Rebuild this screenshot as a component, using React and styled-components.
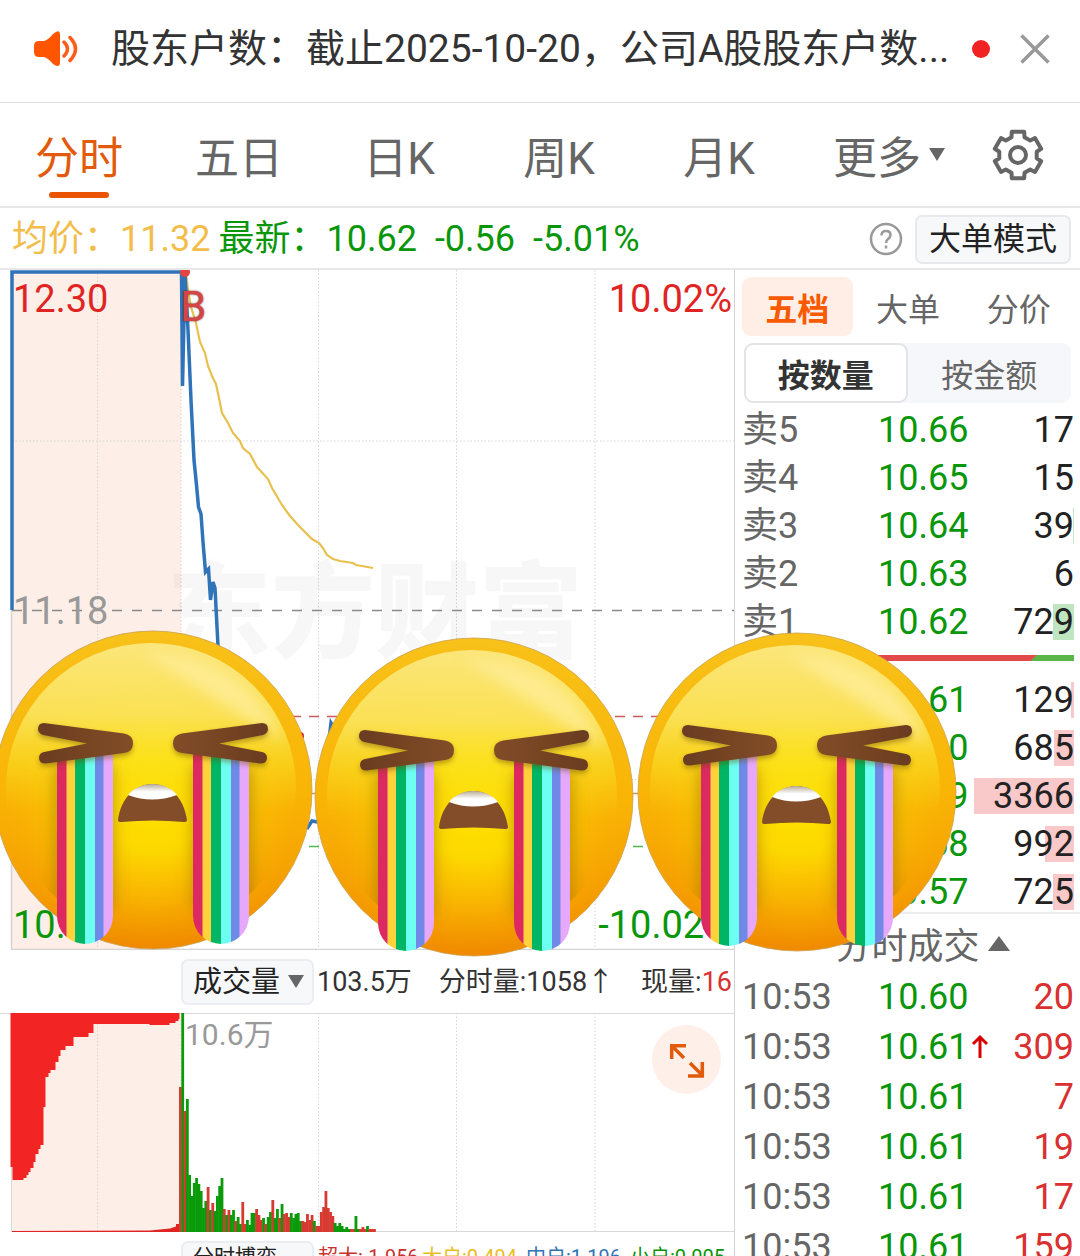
import styled, { createGlobalStyle } from "styled-components";

const GlobalStyle = createGlobalStyle`
  *,
  *::before,
  *::after {
    box-sizing: border-box;
  }
  body {
    margin: 0;
    background: #fff;
    color: #222;
    font-family: Roboto, "Noto Sans CJK SC", sans-serif;
  }
  button {
    font-family: inherit;
    color: inherit;
    margin: 0;
    padding: 0;
    border: 0;
    background: none;
    cursor: pointer;
  }
  svg {
    display: block;
    flex-shrink: 0;
  }
`;

const tabs = ["分时", "五日", "日K", "周K", "月K"];

const sells = [
  { label: "卖5", price: "10.66", amount: 17, bar: 0 },
  { label: "卖4", price: "10.65", amount: 15, bar: 0 },
  { label: "卖3", price: "10.64", amount: 39, bar: 1 },
  { label: "卖2", price: "10.63", amount: 6, bar: 0 },
  { label: "卖1", price: "10.62", amount: 729, bar: 21 },
];

const buys = [
  { label: "买1", price: "10.61", amount: 129, bar: 3 },
  { label: "买2", price: "10.60", amount: 685, bar: 20 },
  { label: "买3", price: "10.59", amount: 3366, bar: 100 },
  { label: "买4", price: "10.58", amount: 992, bar: 29 },
  { label: "买5", price: "10.57", amount: 725, bar: 21 },
];

const trades = [
  { time: "10:53", price: "10.60", amount: 20 },
  { time: "10:53", price: "10.61", amount: 309, up: true },
  { time: "10:53", price: "10.61", amount: 7 },
  { time: "10:53", price: "10.61", amount: 19 },
  { time: "10:53", price: "10.61", amount: 17 },
  { time: "10:53", price: "10.61", amount: 159 },
];

const flows = [
  { name: "超大", value: "-1.956", color: "#c8322f" },
  { name: "大户", value: "0.494", color: "#e8bd1c" },
  { name: "中户", value: "1.196", color: "#2f73b9" },
  { name: "小户", value: "0.005", color: "#0a960a" },
];

const faces = [
  { left: -7, top: 360 },
  { left: 314, top: 367 },
  { left: 637, top: 362 },
];

// one bar per minute: r = up, g = down, followed by the height
const volumes =
  "r145 g219 r121 g133 g57 g36 g49 g54 g48 g41 g24 g31 r45 g22 r29 g21 g36 g46 g54 r23 g17 r22 g17 g22 r11 g15 g8 r30 r8 g12 g7 g19 g19 r23 r17 r12 g14 r8 g15 g20 r32 g14 g23 r14 g28 r18 r19 r15 g19 g14 g18 g19 g11 r11 r10 r18 r12 r17 g11 r6 r6 r20 r25 r41 r24 r20 r16 g9 g6 g9 g6 g3 g5 g3 r3 r3 g16 g3 r3 r5 r3 g6 r3 r3 r3"
    .split(" ")
    .map((item) => ({ up: item[0] === "r", height: Number(item.slice(1)) }));

const auction = [
  [11, 154],
  [13, 167],
  [24, 165],
  [27, 162],
  [29, 159],
  [31, 155],
  [34, 149],
  [36, 141],
  [39, 136],
  [41, 132],
  [44, 94],
  [46, 64],
  [49, 60],
  [51, 57],
  [56, 49],
  [59, 43],
  [61, 37],
  [66, 33],
  [74, 24],
  [89, 20],
  [94, 11],
  [150, 12],
  [170, 10],
  [176, 8],
  [179, 6],
];
const auctionPath =
  "M10.5 0" + auction.map(([x, y]) => `H${x - 0.5}V${y}`).join("") + "H179.5V0Z";

const gearPoints = [0, 1, 2, 3, 4, 5]
  .flatMap((tooth) =>
    [
      [-20, 19],
      [-15, 24],
      [15, 24],
      [20, 19],
    ].map(([offset, radius]) => {
      const angle = ((tooth * 60 - 90 + offset) * Math.PI) / 180;
      return `${26 + radius * Math.cos(angle)},${26 + radius * Math.sin(angle)}`;
    })
  )
  .join(" ");

export default function App() {
  return (
    <Page>
      <GlobalStyle />
      <Notice />
      <PeriodTabs />
      <PriceBar />
      <Board>
        <Charts>
          <PriceChart />
          <VolumeChart />
          <FlowRow>
            <SelectorButton $small>分时博弈</SelectorButton>
            <Flows>
              {flows.map(({ name, value, color }) => (
                <Flow key={name} $color={color}>
                  {name}:{value}
                </Flow>
              ))}
            </Flows>
          </FlowRow>
        </Charts>
        <Side>
          <SideTabs>
            <SideTab $active>五档</SideTab>
            <SideTab>大单</SideTab>
            <SideTab>分价</SideTab>
          </SideTabs>
          <Segment>
            <SegmentButton $active>按数量</SegmentButton>
            <SegmentButton>按金额</SegmentButton>
          </Segment>
          <OrderTable rows={sells} color="#bfe6c0" />
          <RatioBar viewBox="0 0 329 6" preserveAspectRatio="none">
            <rect width="329" height="6" fill="#5cb548" />
            <path d="M0 0H292L286 6H0Z" fill="#e24a4a" />
          </RatioBar>
          <OrderTable rows={buys} color="#f9c8c8" />
          <TradesTitle>
            分时成交
            <Triangle $size={11} $up />
          </TradesTitle>
          <Table>
            <tbody>
              {trades.map(({ time, price, amount, up }, index) => (
                <TradeRow key={index}>
                  <LabelCell>{time}</LabelCell>
                  <PriceCell>
                    <PriceValue>
                      {price}
                      {up && <UpArrow />}
                    </PriceValue>
                  </PriceCell>
                  <AmountCell $color="#d93030">{amount}</AmountCell>
                </TradeRow>
              ))}
            </tbody>
          </Table>
        </Side>
        {faces.map(({ left, top }) => (
          <Face key={left} $left={left} $top={top}>
            <CryingFace />
          </Face>
        ))}
      </Board>
    </Page>
  );
}

function Notice() {
  return (
    <NoticeBar>
      <svg width="46" height="38" viewBox="0 0 46 38" fill="none">
        <path
          d="M6 11H11Q15 10 20 4Q27 -2 27 5V32Q27 39 20 34Q15 28 11 27H6Q1 27 1 22V16Q1 11 6 11Z"
          fill="#ff5500"
        />
        <path
          d="M31 12Q38 19 31 26M37 7.500Q48 19 37 30.500"
          stroke="#ff5c1a"
          strokeWidth="3.500"
          strokeLinecap="round"
        />
      </svg>
      <NoticeText>股东户数：截止2025-10-20，公司A股股东户数...</NoticeText>
      <Dot />
      <button aria-label="关闭">
        <svg width="30" height="30" viewBox="0 0 30 30">
          <path d="M1.500 1.500L28.500 28.500M28.500 1.500L1.500 28.500" stroke="#999" strokeWidth="3.500" />
        </svg>
      </button>
    </NoticeBar>
  );
}

function PeriodTabs() {
  return (
    <TabBar>
      {tabs.map((tab, index) => (
        <Tab key={tab} $active={index === 0}>
          {tab}
        </Tab>
      ))}
      <Tab>
        更多
        <Triangle $size={8} />
      </Tab>
      <GearButton aria-label="设置">
        <svg width="52" height="52" viewBox="0 0 52 52" fill="none" stroke="#666" strokeWidth="4">
          <polygon points={gearPoints} strokeLinejoin="round" />
          <circle cx="26" cy="26" r="8" />
        </svg>
      </GearButton>
    </TabBar>
  );
}

function PriceBar() {
  return (
    <PriceRow>
      <Quote $color="#f2bd4b">均价：11.32</Quote>
      <Quote $color="#0a960a" $gap={8}>
        最新：10.62
      </Quote>
      <Quote $color="#0a960a" $gap={18}>
        -0.56
      </Quote>
      <Quote $color="#0a960a" $gap={18}>
        -5.01%
      </Quote>
      <HelpButton aria-label="帮助">
        <svg width="34" height="34" viewBox="0 0 34 34" fill="none" stroke="#999" strokeWidth="2.500">
          <circle cx="17" cy="17" r="15" />
          <path d="M12.500 13.500Q12.500 9 17 9Q21.500 9 21.500 13Q21.500 15 19 17Q17 18.500 17 21" />
          <path d="M17 23.500V26.500" />
        </svg>
      </HelpButton>
      <ModeButton>大单模式</ModeButton>
    </PriceRow>
  );
}

function PriceChart() {
  return (
    <ChartBox>
      <ChartSvg viewBox="0 0 734 680" fill="none">
        <rect x="12" y="1" width="169" height="678" fill="#fdeee7" />
        <g stroke="#d8d4d4" strokeDasharray="1.500 2">
          <path d="M97.500 0V679M181 0V679M318.500 0V679M456.500 0V679M595 0V679" />
          <path d="M12 171H734M12 509.500H734" />
        </g>
        <path d="M11.500 340V679.500H734" stroke="#d4d4d4" strokeWidth="1.500" />
        <WatermarkText x="375" y="380" textAnchor="middle">
          东方财富
        </WatermarkText>
        <path d="M12 340.500H734" stroke="#8a8a8a" strokeWidth="1.500" strokeDasharray="10" />
        <g strokeDasharray="10 8" strokeWidth="1.500">
          <path d="M183 446.500H734" stroke="#cc5c5c" />
          <path d="M183 523.500H734" stroke="#c09a50" />
          <path d="M183 576.500H734" stroke="#52b852" />
        </g>
        <path
          d="M186 2L188 20L191 37L196 53L200 72L205 83L208 96L212 106L216 114L219 128L222 143L228 153L233 163L240 171L243 178L250 184L257 197L268 209L272 218L282 235L290 246L298 255L312 269L319 273L323 278L327 285L333 289L340 291L353 293L356 295L362 296L373 298"
          stroke="#e8c04f"
          strokeWidth="2.200"
        />
        <g stroke="#2f73b9" strokeWidth="3.500">
          <path d="M12 340V2H181.500" />
          <path d="M181.500 2L182.500 116L185 4L188 60L191 130L194 190L196.500 215L198.500 237L201 244L203 272L205.500 302L208.500 299L210.500 330L213 312L215 318L218 376" />
          <path d="M218 376L262 480L300 545L308 557L312 551L318 552L360 500L331 453L329 470" />
        </g>
        <circle cx="300" cy="466" r="4" fill="#e02020" />
        <circle cx="185" cy="2" r="5" fill="#e34444" />
      </ChartSvg>
      <ChartLabel $corner="topLeft" $color="#e02424">
        12.30
      </ChartLabel>
      <ChartLabel $corner="topRight" $color="#e02424">
        10.02%
      </ChartLabel>
      <ChartLabel $corner="middle" $color="#999">
        11.18
      </ChartLabel>
      <ChartLabel $corner="bottomLeft" $color="#0a960a">
        10.06
      </ChartLabel>
      <ChartLabel $corner="bottomRight" $color="#0a960a">
        -10.02%
      </ChartLabel>
      <BuyMark>B</BuyMark>
    </ChartBox>
  );
}

function VolumeChart() {
  return (
    <>
      <VolumeHeader>
        <SelectorButton>
          成交量
          <Triangle $size={8} />
        </SelectorButton>
        <VolumeStats>
          <span>103.5万</span>
          <span>分时量:1058↑</span>
          <span>
            现量:<Red>16</Red>
          </span>
        </VolumeStats>
      </VolumeHeader>
      <ChartBox>
        <ChartSvg viewBox="0 0 734 220" fill="none">
          <rect x="12" y="0" width="169" height="219" fill="#fdeee7" />
          <path d="M97.500 0V219M181 0V219M318.500 0V219M456.500 0V219M595 0V219" stroke="#d8d4d4" strokeDasharray="1.500 2" />
          <path d="M11.500 0V219M0 0.500H734M11 218.500H734" stroke="#d9d9d9" />
          <path d={auctionPath} fill="#f22424" />
          <path d="M12 219V218L150 217.500L170 215.500L176 213.500V211H180V219Z" fill="#e02424" />
          {volumes.map(({ up, height }, index) => (
            <rect
              key={index}
              x={179 + index * 2.31}
              y={219 - height}
              width="2.800"
              height={height}
              fill={up ? "#d63a30" : "#0a9a0a"}
            />
          ))}
        </ChartSvg>
        <VolumeLabel>10.6万</VolumeLabel>
        <ExpandButton aria-label="全屏">
          <svg width="36" height="36" viewBox="0 0 36 36" fill="none" stroke="#e25a0c" strokeWidth="3.500">
            <path d="M2.700 17V3.700H17M3 4L15 16" />
            <path d="M33.300 20V34H19M33 33L21 21" />
          </svg>
        </ExpandButton>
      </ChartBox>
    </>
  );
}

function OrderTable({ rows, color }) {
  return (
    <Table>
      <tbody>
        {rows.map(({ label, price, amount, bar }) => (
          <OrderRow key={label}>
            <LabelCell>{label}</LabelCell>
            <PriceCell>{price}</PriceCell>
            <AmountCell $color="#222">
              <AmountBar $color={color} style={{ width: bar }} />
              <AmountValue>{amount}</AmountValue>
            </AmountCell>
          </OrderRow>
        ))}
      </tbody>
    </Table>
  );
}

function UpArrow() {
  return (
    <svg width="18" height="26" viewBox="0 0 18 26" fill="none" stroke="#d90000" strokeWidth="3">
      <path d="M9 24V3M2 10L9 3L16 10" />
    </svg>
  );
}

const stripes = [
  [0, 10, "#dc2962"],
  [9.5, 9, "#ffd13b"],
  [18, 10.5, "#00b563"],
  [28, 10, "#6cfff2"],
  [38, 9, "#7088e6"],
  [46.5, 9.5, "#e6a8fb"],
];

function CryingFace() {
  return (
    <svg width="320" height="320" viewBox="0 0 320 320">
      <defs>
        <linearGradient id="faceBase" x1="0" y1="0" x2="0" y2="1">
          <stop offset="0" stopColor="#f8c21a" />
          <stop offset="0.5" stopColor="#f9b506" />
          <stop offset="0.8" stopColor="#f59e02" />
          <stop offset="1" stopColor="#f08a00" />
        </linearGradient>
        <radialGradient id="faceGlow" cx="160" cy="160" r="155" gradientUnits="userSpaceOnUse">
          <stop offset="0" stopColor="#fee200" />
          <stop offset="0.4" stopColor="#fdd800" />
          <stop offset="0.7" stopColor="#fbc402" stopOpacity="0.6" />
          <stop offset="1" stopColor="#f9b000" stopOpacity="0" />
        </radialGradient>
        <linearGradient id="faceLight" x1="0" y1="0" x2="0" y2="1">
          <stop offset="0" stopColor="#fbe67a" />
          <stop offset="0.25" stopColor="#fbe45c" stopOpacity="0.9" />
          <stop offset="0.42" stopColor="#f9e42a" stopOpacity="0.5" />
          <stop offset="0.58" stopColor="#fbd520" stopOpacity="0" />
        </linearGradient>
        <linearGradient id="faceTeeth" x1="0" y1="0" x2="0" y2="1">
          <stop offset="0" stopColor="#b9ab95" />
          <stop offset="0.5" stopColor="#fff" />
        </linearGradient>
        <linearGradient id="faceEye" x1="0" y1="0" x2="1" y2="0">
          <stop offset="0" stopColor="#6a3c20" />
          <stop offset="1" stopColor="#824d28" />
        </linearGradient>
        <clipPath id="faceClip">
          <circle cx="158" cy="158" r="145" />
        </clipPath>
        <clipPath id="tearClip">
          <path d="M0 121H56V286A28 28 0 0 1 0 286Z" />
        </clipPath>
        <filter id="faceBlur" x="-50%" y="-50%" width="200%" height="200%">
          <feGaussianBlur stdDeviation="7" />
        </filter>
        <filter id="faceShadow" x="-20%" y="-30%" width="140%" height="180%">
          <feDropShadow dx="0" dy="3" stdDeviation="2.500" floodColor="#6b4a00" floodOpacity="0.45" />
        </filter>
        <g id="faceTear" clipPath="url(#tearClip)">
          {stripes.map(([x, width, fill]) => (
            <rect key={x} x={x} y="100" width={width} height="214" fill={fill} />
          ))}
        </g>
        <path
          id="faceLid"
          d="M51 93L131 103.500Q140 105 140 113.500Q140 122 131 123L53 133.500Q46 133.500 46 128Q46 123 51 122L94 113.500L50 105Q45 103 45 99Q45 93 51 93Z"
          fill="url(#faceEye)"
        />
      </defs>
      <circle cx="160" cy="160" r="159" fill="url(#faceBase)" stroke="#c9a050" strokeWidth="0.800" />
      <circle cx="160" cy="160" r="158" fill="url(#faceGlow)" />
      <circle cx="158" cy="158" r="145" fill="url(#faceLight)" />
      <g clipPath="url(#faceClip)">
        <g filter="url(#faceBlur)">
          <path d="M150 22Q256 24 290 112Q236 78 150 22Z" fill="#fff0a0" opacity="0.7" />
          <g fill="#9c7400" opacity="0.5">
            <rect x="60" y="130" width="62" height="154" rx="16" />
            <rect x="198" y="130" width="62" height="154" rx="16" />
          </g>
        </g>
      </g>
      <use href="#faceTear" x="64" />
      <use href="#faceTear" x="200" />
      <g filter="url(#faceShadow)">
        <use href="#faceLid" />
        <use href="#faceLid" transform="translate(320) scale(-1 1)" />
      </g>
      <path
        d="M125 190C128 168 142 154 159.500 154C177 154 191 168 194 190Q194 192 191 192Q160 189 128 192Q125 192 125 190Z"
        fill="#824d28"
      />
      <path d="M135 165Q159 174 184 165C178 158 170 154 159.500 154C149 154 141 158 135 165Z" fill="url(#faceTeeth)" />
    </svg>
  );
}

const Page = styled.div`
  height: 100vh;
  overflow: hidden;
`;

const NoticeBar = styled.div`
  display: flex;
  align-items: center;
  height: 103px;
  padding: 0 30px 4px 33px;
  border-bottom: 1px solid #dcdfe0;
`;

const NoticeText = styled.div`
  flex: 1;
  min-width: 0;
  margin-left: 32px;
  overflow: hidden;
  white-space: nowrap;
  font-size: 39px;
  line-height: 56px;
  color: #333;
`;

const Dot = styled.span`
  width: 18px;
  height: 18px;
  margin: 0 30px 0 20px;
  border-radius: 50%;
  background: #f02222;
`;

const TabBar = styled.nav`
  display: grid;
  grid-template-columns: repeat(5, 160fr) 180fr 76fr;
  height: 105px;
  padding-right: 24px;
  border-bottom: 2px solid #e8e8e8;
`;

const Tab = styled.button`
  position: relative;
  display: flex;
  align-items: center;
  justify-content: center;
  gap: 8px;
  padding-right: 2px;
  font-size: 44px;
  color: ${({ $active }) => ($active ? "#e25a0c" : "#666")};

  &::after {
    content: "";
    display: ${({ $active }) => ($active ? "block" : "none")};
    position: absolute;
    left: 50%;
    bottom: 8px;
    width: 60px;
    height: 6px;
    margin-left: -31px;
    border-radius: 3px;
    background: #ea5504;
  }
`;

const Triangle = styled.span`
  width: 0;
  height: 0;
  border: ${({ $size }) => $size}px solid transparent;
  border-top: ${({ $size, $up }) => ($up ? "0" : `${$size + 5}px solid #666`)};
  border-bottom: ${({ $size, $up }) => ($up ? `${$size + 4}px solid #666` : "0")};
`;

const GearButton = styled.button`
  display: flex;
  align-items: center;
  justify-content: center;
`;

const PriceRow = styled.div`
  display: flex;
  align-items: center;
  height: 62px;
  padding: 2px 9px 0 12px;
  border-bottom: 2px solid #e8e8e8;
`;

const Quote = styled.span`
  margin-left: ${({ $gap = 0 }) => $gap}px;
  font-size: 36px;
  line-height: 48px;
  white-space: nowrap;
  color: ${({ $color }) => $color};
`;

const HelpButton = styled.button`
  margin-left: auto;
`;

const ModeButton = styled.button`
  height: 49px;
  margin-left: 12px;
  padding: 0 12px;
  border: 2px solid #e6e9ee;
  border-radius: 7px;
  background: #f7f8fa;
  font-size: 32px;
  line-height: 44px;
`;

const Board = styled.main`
  position: relative;
  display: grid;
  grid-template-columns: minmax(0, 734fr) minmax(0, 346fr);
`;

const Charts = styled.section`
  min-width: 0;
`;

const ChartBox = styled.div`
  position: relative;
`;

const ChartSvg = styled.svg`
  width: 100%;
  height: auto;
`;

const WatermarkText = styled.text`
  font-family: "Noto Sans CJK SC", sans-serif;
  font-size: 104px;
  font-weight: 900;
  fill: #000;
  fill-opacity: 0.03;
`;

const corners = {
  topLeft: "left: 13px; top: 6px;",
  topRight: "right: 2px; top: 6px;",
  middle: "left: 13px; top: 50%; margin-top: -22px;",
  bottomLeft: "left: 13px; bottom: 2px;",
  bottomRight: "right: 2px; bottom: 2px;",
};

const ChartLabel = styled.span`
  position: absolute;
  ${({ $corner }) => corners[$corner]}
  font-size: 38px;
  line-height: 46px;
  color: ${({ $color }) => $color};
`;

const BuyMark = styled.span`
  position: absolute;
  left: 180px;
  top: 14px;
  font-size: 42px;
  line-height: 46px;
  color: #d64545;
  text-shadow: 0 0 2px #5a2020;
`;

const VolumeHeader = styled.div`
  display: flex;
  align-items: center;
  height: 63px;
  padding-left: 181px;
`;

const SelectorButton = styled.button`
  display: flex;
  flex-shrink: 0;
  align-items: ${({ $small }) => ($small ? "flex-start" : "center")};
  justify-content: space-between;
  width: 133px;
  height: 46px;
  padding: 0 8px 0 10px;
  border: 2px solid #eaedf2;
  border-radius: 7px;
  background: #f7f8fa;
  font-size: ${({ $small }) => ($small ? "21px" : "29px")};
  line-height: ${({ $small }) => ($small ? "28px" : "36px")};
`;

const VolumeStats = styled.div`
  display: flex;
  flex: 1;
  justify-content: space-between;
  padding: 0 2px 0 3px;
  font-size: 27px;
  line-height: 40px;
  white-space: nowrap;
  color: #333;
`;

const Red = styled.span`
  color: #d93030;
`;

const VolumeLabel = styled.span`
  position: absolute;
  left: 185px;
  top: 0;
  font-size: 30px;
  line-height: 44px;
  color: #999;
`;

const ExpandButton = styled.button`
  position: absolute;
  top: 12px;
  right: 13px;
  display: flex;
  align-items: center;
  justify-content: center;
  width: 69px;
  height: 69px;
  border-radius: 50%;
  background: #fef0e9;
`;

const FlowRow = styled.div`
  display: flex;
  padding: 8px 0 0 181px;
`;

const Flows = styled.div`
  display: grid;
  flex: 1;
  grid-template-columns: repeat(4, 1fr);
  padding-left: 4px;
`;

const Flow = styled.span`
  font-size: 20px;
  line-height: 32px;
  white-space: nowrap;
  color: ${({ $color }) => $color};
`;

const Side = styled.section`
  padding: 7px 6px 0 7px;
  border-left: 1px solid #d4d4d4;
`;

const SideTabs = styled.div`
  display: grid;
  grid-template-columns: repeat(3, 1fr);
`;

const SideTab = styled.button`
  height: 59px;
  border-radius: 9px;
  background: ${({ $active }) => ($active ? "#feeee6" : "none")};
  font-size: 32px;
  font-weight: ${({ $active }) => ($active ? 700 : 400)};
  color: ${({ $active }) => ($active ? "#f95a00" : "#666")};
`;

const Segment = styled.div`
  display: grid;
  grid-template-columns: 1fr 1fr;
  height: 60px;
  margin: 7px 3px 3px 2px;
  border-radius: 9px;
  background: #f6f7fa;
`;

const SegmentButton = styled.button`
  border: ${({ $active }) => ($active ? "2px solid #e4e4e6" : "0")};
  border-radius: 9px;
  background: ${({ $active }) => ($active ? "#fff" : "none")};
  font-size: 32px;
  font-weight: ${({ $active }) => ($active ? 700 : 400)};
  color: ${({ $active }) => ($active ? "#333" : "#666")};
`;

const Table = styled.table`
  width: 100%;
  table-layout: fixed;
  border-collapse: collapse;
  font-size: 36px;
  line-height: 44px;
`;

const OrderRow = styled.tr`
  height: 48px;
`;

const TradeRow = styled.tr`
  height: 50px;
`;

const LabelCell = styled.td`
  width: 41%;
  padding: 0;
  color: #666;
`;

const PriceCell = styled.td`
  width: 27%;
  padding: 0;
  color: #0a960a;
`;

const PriceValue = styled.span`
  display: flex;
  align-items: center;
  gap: 2px;
`;

const AmountCell = styled.td`
  position: relative;
  padding: 0;
  text-align: right;
  color: ${({ $color }) => $color};
`;

const AmountBar = styled.span`
  position: absolute;
  top: 6px;
  right: 0;
  height: 36px;
  background: ${({ $color }) => $color};
`;

const AmountValue = styled.span`
  position: relative;
`;

const RatioBar = styled.svg`
  width: 100%;
  height: 6px;
  margin: 9px 0 15px;
`;

const TradesTitle = styled.h2`
  display: flex;
  align-items: center;
  justify-content: center;
  gap: 8px;
  height: 60px;
  margin: -4px -6px 0 -7px;
  padding-left: 30px;
  border-top: 2px solid #eee;
  font-size: 36px;
  font-weight: 400;
  color: #666;
`;

const Face = styled.div`
  position: absolute;
  left: ${({ $left }) => $left}px;
  top: ${({ $top }) => $top}px;
  pointer-events: none;
`;
